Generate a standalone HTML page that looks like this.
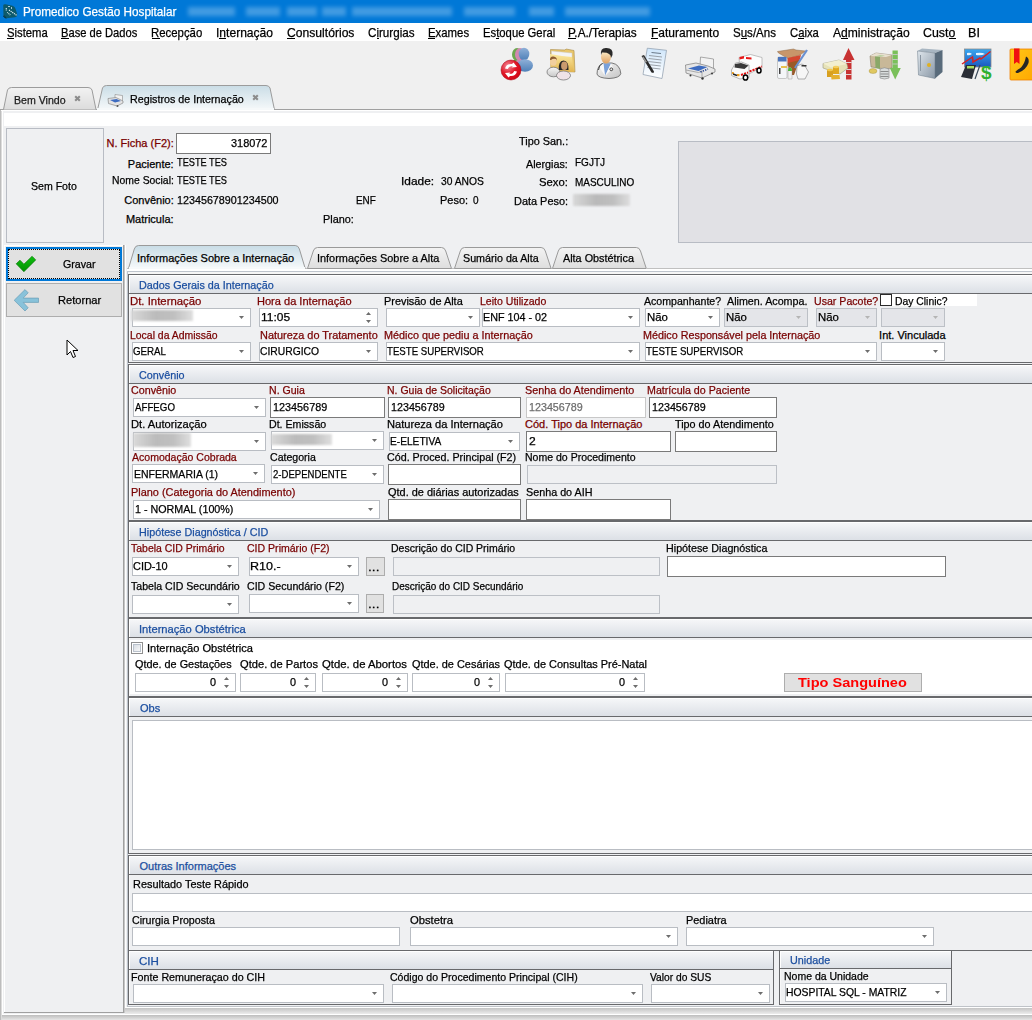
<!DOCTYPE html><html><head><meta charset="utf-8"><style>
html,body{margin:0;padding:0}
body{width:1032px;height:1020px;overflow:hidden;position:relative;background:#f0f0f0;font-family:"Liberation Sans",sans-serif}
.t{position:absolute;line-height:1;white-space:nowrap;transform-origin:0 0;-webkit-text-stroke:0.25px currentColor}
.b{position:absolute;box-sizing:border-box}
.r{position:absolute}
.blur{position:absolute;background:linear-gradient(90deg,#d6d6d6,#b4b4b4 40%,#bababa 70%,#dcdcdc);filter:blur(1.3px);opacity:.9}
svg{position:absolute;overflow:visible}
</style></head><body>
<div class="r" style="left:0px;top:0px;width:1032px;height:23px;background:#0078d7;"></div>
<svg style="left:0;top:0" width="20" height="20" viewBox="0 0 20 20"><path d="M3.2 5.5 Q3.5 4 5.5 4.3 L12.5 5.8 Q15 6.5 15.8 9.5 L17.3 14.5 Q17.3 17 15 17.3 L6.5 18.3 Q4 18.5 3.5 16Z" fill="#0d5a6b"/><path d="M6.3 8 V11" stroke="#cfe4ea" stroke-width="1.2" stroke-dasharray="1 .6"/><path d="M7.2 12.3 L10.3 15" stroke="#d6eaf0" stroke-width="1.1" stroke-dasharray="1 .7"/><path d="M9 10 L16.5 15.2" stroke="#e0f0f6" stroke-width="1.2" stroke-dasharray="1.2 .8"/><path d="M8 6.5 H10 M11.5 7 V9" stroke="#a8c8d2" stroke-width="1"/><path d="M3.6 15.8 L6.2 18.4" stroke="#0a1a20" stroke-width="1.2" stroke-dasharray="1 .6"/></svg>
<div class="t" style="left:22.56px;top:5.67px;font-size:12.2px;color:#fff;transform:scaleX(0.9638);">Promedico Gestão Hospitalar</div>
<div class="r" style="left:188px;top:7px;width:47px;height:9px;background:#8cc2ee;filter:blur(2.2px);opacity:.47"></div>
<div class="r" style="left:246px;top:7px;width:34px;height:9px;background:#8cc2ee;filter:blur(2.2px);opacity:.47"></div>
<div class="r" style="left:287px;top:7px;width:30px;height:9px;background:#8cc2ee;filter:blur(2.2px);opacity:.47"></div>
<div class="r" style="left:322px;top:7px;width:24px;height:9px;background:#8cc2ee;filter:blur(2.2px);opacity:.47"></div>
<div class="r" style="left:352px;top:7px;width:100px;height:9px;background:#8cc2ee;filter:blur(2.2px);opacity:.47"></div>
<div class="r" style="left:464px;top:7px;width:51px;height:9px;background:#8cc2ee;filter:blur(2.2px);opacity:.47"></div>
<div class="r" style="left:529px;top:7px;width:25px;height:9px;background:#8cc2ee;filter:blur(2.2px);opacity:.47"></div>
<div class="r" style="left:565px;top:7px;width:85px;height:9px;background:#8cc2ee;filter:blur(2.2px);opacity:.47"></div>
<div class="r" style="left:0px;top:23px;width:1032px;height:18px;background:#fff;"></div>
<div class="t" style="left:6.59px;top:26.67px;font-size:12.2px;color:#000;transform:scaleX(0.9266);">Sistema</div>
<div class="r" style="left:6.6px;top:38px;width:7.5px;height:1px;background:#000"></div>
<div class="t" style="left:61.31px;top:26.67px;font-size:12.2px;color:#000;transform:scaleX(0.9154);">Base de Dados</div>
<div class="r" style="left:61.3px;top:38px;width:7.4px;height:1px;background:#000"></div>
<div class="t" style="left:151.49px;top:26.67px;font-size:12.2px;color:#000;transform:scaleX(0.9338);">Recepção</div>
<div class="r" style="left:151.5px;top:38px;width:8.2px;height:1px;background:#000"></div>
<div class="t" style="left:216.01px;top:26.67px;font-size:12.2px;color:#000;transform:scaleX(0.9900);">Internação</div>
<div class="r" style="left:219.4px;top:38px;width:6.7px;height:1px;background:#000"></div>
<div class="t" style="left:286.59px;top:26.67px;font-size:12.2px;color:#000;transform:scaleX(0.9956);">Consultórios</div>
<div class="r" style="left:286.6px;top:38px;width:8.8px;height:1px;background:#000"></div>
<div class="t" style="left:368.22px;top:26.67px;font-size:12.2px;color:#000;transform:scaleX(0.9547);">Cirurgias</div>
<div class="r" style="left:376.6px;top:38px;width:2.6px;height:1px;background:#000"></div>
<div class="t" style="left:427.89px;top:26.67px;font-size:12.2px;color:#000;transform:scaleX(0.9334);">Exames</div>
<div class="r" style="left:427.9px;top:38px;width:7.6px;height:1px;background:#000"></div>
<div class="t" style="left:482.50px;top:26.67px;font-size:12.2px;color:#000;transform:scaleX(0.9266);">Estoque Geral</div>
<div class="r" style="left:495.7px;top:38px;width:3.1px;height:1px;background:#000"></div>
<div class="t" style="left:568.15px;top:26.67px;font-size:12.2px;color:#000;transform:scaleX(0.9698);">P.A./Terapias</div>
<div class="r" style="left:568.2px;top:38px;width:7.9px;height:1px;background:#000"></div>
<div class="t" style="left:650.54px;top:26.67px;font-size:12.2px;color:#000;transform:scaleX(0.9851);">Faturamento</div>
<div class="r" style="left:650.5px;top:38px;width:7.3px;height:1px;background:#000"></div>
<div class="t" style="left:733.08px;top:26.67px;font-size:12.2px;color:#000;transform:scaleX(0.9467);">Sus/Ans</div>
<div class="r" style="left:740.8px;top:38px;width:6.4px;height:1px;background:#000"></div>
<div class="t" style="left:789.74px;top:26.67px;font-size:12.2px;color:#000;transform:scaleX(0.9260);">Caixa</div>
<div class="r" style="left:797.9px;top:38px;width:6.3px;height:1px;background:#000"></div>
<div class="t" style="left:833.20px;top:26.67px;font-size:12.2px;color:#000;transform:scaleX(0.9922);">Administração</div>
<div class="r" style="left:841.3px;top:38px;width:6.7px;height:1px;background:#000"></div>
<div class="t" style="left:923.48px;top:26.67px;font-size:12.2px;color:#000;transform:scaleX(1.0148);">Custo</div>
<div class="r" style="left:948.9px;top:38px;width:6.9px;height:1px;background:#000"></div>
<div class="t" style="left:968.29px;top:26.67px;font-size:12.2px;color:#000;transform:scaleX(1.0326);">BI</div>
<svg style="left:497px;top:44px" width="40" height="40" viewBox="0 0 40 40">
<defs><radialGradient id="rc" cx="0.35" cy="0.3" r="0.8"><stop offset="0" stop-color="#f48a98"/><stop offset="0.5" stop-color="#e01828"/><stop offset="1" stop-color="#d00010"/></radialGradient>
<linearGradient id="bp" x1="0" y1="0" x2="0" y2="1"><stop offset="0" stop-color="#8fb0d8"/><stop offset="1" stop-color="#4f80b8"/></linearGradient></defs>
<ellipse cx="20" cy="10.5" rx="5" ry="6.5" fill="#6aa84f"/><ellipse cx="21" cy="21" rx="7" ry="6" fill="#6aa84f"/>
<ellipse cx="23" cy="10.5" rx="5" ry="6.5" fill="#d088b0"/><ellipse cx="24" cy="21" rx="7" ry="6" fill="#d088b0"/>
<ellipse cx="27" cy="10" rx="5.3" ry="6.3" fill="url(#bp)"/><ellipse cx="28" cy="21.5" rx="8" ry="6.2" fill="url(#bp)"/>
<circle cx="14" cy="26" r="10" fill="url(#rc)" stroke="#a00010" stroke-width=".5"/>
<path d="M8 24.5 Q9.5 19.5 15 20 L16.5 18.5 L20 23 L14.5 23.5 L15.8 22.2 Q12 21.8 10.8 25Z M20 27.5 Q18.5 32.5 13 32 L11.5 33.5 L8 29 L13.5 28.5 L12.2 29.8 Q16 30.2 17.2 27Z" fill="#fff"/>
</svg>
<svg style="left:543px;top:44px" width="40" height="40" viewBox="0 0 40 40">
<defs><linearGradient id="fd" x1="0" y1="0" x2="0" y2="1"><stop offset="0" stop-color="#fbe9a0"/><stop offset="1" stop-color="#e2b450"/></linearGradient></defs>
<path d="M7.5 5.5 L22 6 L23 5 L31 6.5 L32 28 L8 27Z" fill="#e9c66a" stroke="#a88a48" stroke-width=".6"/>
<path d="M8.5 7 L29 9 L29 14 L8.5 12Z" fill="#f4f4f4" stroke="#c0c0c0" stroke-width=".4"/>
<path d="M7 10 L19 12 L29 13 L31 28 L8 27Z" fill="url(#fd)"/>
<defs><linearGradient id="bd1" x1="0" y1="0" x2="0" y2="1"><stop offset="0" stop-color="#f6f6f6"/><stop offset="1" stop-color="#c8c8c8"/></linearGradient></defs><ellipse cx="10.5" cy="28" rx="6.5" ry="4.8" fill="url(#bd1)" stroke="#6a6a6a" stroke-width=".7"/>
<ellipse cx="10.3" cy="17.5" rx="3.3" ry="4.3" fill="#f1cf9e"/><path d="M7 16 Q7 12 10.5 12.5 Q14 13 14 16.5 L13 15 Q10 14 8 16Z" fill="#8a5a30"/>
<ellipse cx="20.5" cy="31.5" rx="7" ry="4.5" fill="#efe2e6" stroke="#6a6a6a" stroke-width=".7"/>
<path d="M15.8 26 Q15 17 20.5 16.5 Q26 17 25.5 26 Z" fill="#262626"/><ellipse cx="21.3" cy="21.8" rx="3.2" ry="4.3" fill="#c99a6e"/>
</svg>
<svg style="left:589px;top:44px" width="40" height="40" viewBox="0 0 40 40">
<defs><linearGradient id="fc" x1="0" y1="0" x2="0" y2="1"><stop offset="0" stop-color="#fdf2d0"/><stop offset="1" stop-color="#e0a060"/></linearGradient></defs>
<defs><linearGradient id="dc" x1="0" y1="0" x2="1" y2="1"><stop offset="0" stop-color="#f8f8f8"/><stop offset="1" stop-color="#c4c4c4"/></linearGradient></defs><path d="M8 30 Q8 21.5 14.5 19 L23 19 Q31 20.5 31.8 29.5 Q31 34 20 34.5 Q9 34 8 30Z" fill="url(#dc)" stroke="#5a5a5a" stroke-width=".8"/>
<path d="M14 19.5 L22 19.5 L16 32Z" fill="#7aa0d8"/>
<path d="M14.5 19.5 L16 32 L11 24Z M22 19.5 L16 32 L24 24Z" fill="#f8f8f8"/>
<ellipse cx="17" cy="13" rx="5" ry="6.5" fill="url(#fc)"/>
<path d="M12 11 Q11 3.5 17.5 4 Q24.5 4.2 23.5 11 L22 14 Q22 8 13 8.5Z" fill="#2a2a2a"/>
<circle cx="22.3" cy="25.3" r="1.4" fill="none" stroke="#444" stroke-width="1"/><path d="M9.5 26 Q10 21 13 19.5" stroke="#333" stroke-width=".9" fill="none"/>
</svg>
<svg style="left:635px;top:44px" width="40" height="40" viewBox="0 0 40 40">
<defs><linearGradient id="pp" x1="0" y1="0" x2="0" y2="1"><stop offset="0" stop-color="#cfe6fb"/><stop offset="1" stop-color="#ffffff"/></linearGradient></defs>
<path d="M12.3 4.2 L31.5 6.3 L27 34.5 L8 30.5Z" fill="url(#pp)" stroke="#8a9aaa" stroke-width=".7"/>
<path d="M16.5 8.5 L26 9.5" stroke="#6a7a8a" stroke-width="1"/>
<path d="M14 11.5 L27 13 M13.6 14.5 L26.6 16 M13.2 17.5 L26.2 19 M12.8 20.5 L25.8 22 M12.4 23.5 L25.4 25" stroke="#9aa2aa" stroke-width="1"/>
<path d="M6.5 12 L9 11 L19 27.5 L18.5 29 L16.5 28.5Z" fill="#2a2a2a"/><path d="M7 13 L8.5 12.5 L12 18 L10.5 18.5Z" fill="#9a9a9a"/>
</svg>
<svg style="left:680px;top:44px" width="40" height="40" viewBox="0 0 40 40">
<path d="M20.5 13 L33.5 15 L33.5 27 L29 26 L20 22Z" fill="#f2f2f2" stroke="#8a8a8a" stroke-width=".7"/>
<path d="M5.5 21 L16 19 L28 22 L35 25 L35 28 L22 34 L6 29Z" fill="#e6e6e6" stroke="#7a7a7a" stroke-width=".7"/>
<path d="M8 24.5 L19 21.5 L27.5 23 L18.5 27Z" fill="#3e6cc0"/>
<path d="M6 26 L18.5 28.5 L22 27 L22 33.5" fill="none" stroke="#9a9a9a" stroke-width=".8"/>
<path d="M20.5 28 L28 25" stroke="#1a3a8a" stroke-width="1.6" stroke-dasharray="1.2 1.3"/>
<circle cx="10.5" cy="31.5" r="1" fill="#333"/><circle cx="22.5" cy="34.5" r="1.2" fill="#333"/><circle cx="32" cy="29.5" r="1.1" fill="#444"/>
</svg>
<svg style="left:726px;top:44px" width="40" height="40" viewBox="0 0 40 40">
<path d="M13 13.5 L24.5 10.5 L36 13.5 L36 23 L23 30 L14 27Z" fill="#fdfdfd" stroke="#9a9a9a" stroke-width=".6"/>
<path d="M5.5 26 L9.5 19 L15.5 18 L23 21 L23 33.5 L14 35 L5.5 31.5Z" fill="#fafafa" stroke="#8a8a8a" stroke-width=".6"/>
<path d="M9 20 L15 19 L22.5 21.5 L18.5 25 L8.5 23.5Z" fill="#3a3a3a"/>
<path d="M13.5 13 L18 12 L18 14.5 L13.5 15.5Z M20 13 L25.5 13.5 L25.5 15.5 L20 15Z" fill="#e81818"/>
<path d="M15 31 L22 28.5 M23.5 27.5 L36 22.5" stroke="#e01010" stroke-width="2" stroke-dasharray="2.2 1"/>
<rect x="6" y="28" width="1.8" height="2" fill="#f0a020"/><rect x="11" y="30" width="2.5" height="2.2" fill="#f0a020"/><path d="M7 30 L11 31.5" stroke="#222" stroke-width="1.5"/>
<ellipse cx="19.5" cy="33.5" rx="2.2" ry="2.6" fill="#fff" stroke="#000" stroke-width="1.5"/><ellipse cx="33" cy="26.5" rx="2" ry="2.5" fill="#fff" stroke="#000" stroke-width="1.5"/>
</svg>
<svg style="left:772px;top:44px" width="40" height="40" viewBox="0 0 40 40">
<path d="M5.5 7.5 L21.5 5 L24 6 L33.5 7 L28 11 L16 14.5 L6.5 9Z" fill="#c8966a" stroke="#8a6a4a" stroke-width=".5"/>
<path d="M15.5 14 L29 11 L27 19 L15.5 22Z" fill="#d44830"/>
<path d="M16 19 L27.5 16 L22 31 L17 31Z" fill="#9a5a28"/>
<rect x="5.5" y="13" width="9.5" height="21.5" rx="1.5" fill="#f4f6f8" stroke="#9a9a9a" stroke-width=".5"/>
<rect x="6" y="13" width="8.5" height="4.5" fill="#4a74bc"/><rect x="9" y="22" width="6" height="2" fill="#e8c050"/><rect x="7" y="24" width="1.5" height="6" fill="#444"/>
<path d="M16 27 Q16 23.5 18 23.5 Q20 23.5 20 27 L20 35 L16 35Z" fill="#f0f0f0" stroke="#888" stroke-width=".4"/><path d="M16 27 Q16 23.5 18 23.5 Q20 23.5 20 27Z" fill="#4ab83a"/>
<path d="M23 24 L35 6" stroke="#6a90d0" stroke-width="2.2"/>
<path d="M25 22 L30 20 L33 22 L36.5 28 L33 35 L26 35 L24.5 30Z" fill="#f6f6f6" stroke="#666" stroke-width=".5"/><rect x="29.5" y="21" width="5" height="1.5" fill="#333"/>
</svg>
<svg style="left:818px;top:44px" width="40" height="40" viewBox="0 0 40 40">
<path d="M30.5 4 L36.5 16 L33.5 16 L33.5 35.5 L28 35.5 L28 16 L25 16Z" fill="#c83232"/>
<path d="M28 18.5 H33.5 M28 25.5 H33.5 M28 30.5 H33.5" stroke="#e8e8e8" stroke-width=".9"/>
<path d="M5 19.5 L21 16 L29 20 L30 24 L22 30 L5 24Z" fill="#e6e2b8" stroke="#8a8a70" stroke-width=".5"/><path d="M5 19.5 L21 16 L29 20 L13 23.5Z" fill="#f2efd0"/>
<path d="M9 26 L15 26 L15 33 L9 33Z" fill="#d8a020"/><ellipse cx="12" cy="26" rx="3" ry="1.3" fill="#f0c850"/>
<path d="M15 23 L21 23 L21 30 L15 30Z" fill="#e0a820"/><ellipse cx="18" cy="23" rx="3" ry="1.3" fill="#f4d060"/>
<path d="M13 31 L21.5 31 L22 35 L13.5 35.5Z" fill="#e4b030"/>
</svg>
<svg style="left:864px;top:44px" width="40" height="40" viewBox="0 0 40 40">
<path d="M6 12 L12 9 L28 11 L28 24 L22 25 L7 23Z" fill="#c8b898" stroke="#7a705a" stroke-width=".5"/>
<path d="M6 12 L12 9 L28 11 L22 13Z" fill="#e8e0d0"/>
<path d="M11 12.5 L16 11 L21 11.5 L16 13Z" fill="#b8d0a0"/><path d="M11 12.5 L16 13 L16 25 L11.5 24Z" fill="#8aa868"/>
<ellipse cx="9" cy="27" rx="4" ry="2.5" fill="#e0c860" stroke="#a08a40" stroke-width=".4"/>
<path d="M16 25 Q20.5 22.5 25 25 L25 34 Q20.5 36 16 34Z" fill="#d8dcdc" stroke="#707070" stroke-width=".5"/>
<path d="M16.5 27.5 H24.5 M16.5 30 H24.5 M16.5 32.5 H24.5" stroke="#6a6a6a" stroke-width=".7"/>
<path d="M28.5 6.5 L33.8 6.5 L33.8 24 L36.8 24 L31.2 35.5 L25.8 24 L28.5 24Z" fill="#7ac05a"/>
<path d="M28.5 10.5 H33.8 M28.5 15.5 H33.8 M28.5 20 H33.8" stroke="#c8c8c8" stroke-width=".9"/>
</svg>
<svg style="left:910px;top:44px" width="40" height="40" viewBox="0 0 40 40">
<defs><linearGradient id="sf" x1="0" y1="0" x2="1" y2="1"><stop offset="0" stop-color="#dfe6ec"/><stop offset="1" stop-color="#8a98a6"/></linearGradient></defs>
<path d="M7.5 7 L12 4.5 L32.5 6 L25 9Z" fill="#a8b6c2"/>
<path d="M25 9 L32.5 6 L32.5 28 L25 34.5Z" fill="#596b7b"/>
<path d="M7.5 7 L25 9 L25 34.5 L8.5 31Z" fill="url(#sf)" stroke="#6a7a88" stroke-width=".5"/>
<path d="M10.5 11 L10.5 27" stroke="#8a96a2" stroke-width="1"/>
<circle cx="19" cy="21" r="2" fill="#e0b020"/>
</svg>
<svg style="left:956px;top:44px" width="40" height="40" viewBox="0 0 40 40">
<defs><linearGradient id="sc" x1="0" y1="0" x2="0" y2="1"><stop offset="0" stop-color="#3aa8f0"/><stop offset="1" stop-color="#1a58c0"/></linearGradient></defs>
<rect x="8.5" y="5" width="26.5" height="18" fill="url(#sc)" stroke="#8a8a8a" stroke-width=".8"/>
<path d="M11 9 Q14 8 16 10 Q13 12 11 11Z M20 9 Q26 8 29 10 Q25 12 20 11Z" fill="#e8f4ff"/>
<path d="M6 20 L16.5 13 L17 18 L24 14 L25 15 L34.5 7.5" stroke="#d82020" stroke-width="1.5" fill="none"/>
<path d="M5 33 L10 21 L20 21 L16 35Z" fill="#2a2e36"/><rect x="11" y="22" width="7" height="2.5" fill="#a8e060"/>
<path d="M19 35 L24 21" stroke="#3a4a5a" stroke-width="1.2"/>
<text x="25" y="34.5" font-size="19" font-weight="bold" fill="#30b030" font-family="Liberation Sans">$</text>
</svg>
<svg style="left:1000px;top:44px" width="32" height="40" viewBox="0 0 32 40">
<defs><linearGradient id="bk" x1="0" y1="0" x2="1" y2="1"><stop offset="0" stop-color="#ffc818"/><stop offset="1" stop-color="#ffa800"/></linearGradient></defs>
<rect x="10" y="5" width="24" height="31" rx="1" fill="url(#bk)" stroke="#f08000" stroke-width=".8"/>
<path d="M14 4.5 L19.5 4.5 L19.5 20 L16.8 18 L14 20Z" fill="#f01010"/>
<path d="M26 12.5 Q29.5 14 28.5 19 Q26 26 18 29 Q15.5 29.5 15.5 27.5 L18 25.5 Q21.5 24 24 19 L25 16.5Z" fill="#262626"/>
</svg>
<div class="r" style="left:0px;top:109px;width:1032px;height:1px;background:#a0a0a0;"></div>
<svg style="left:0;top:84px" width="100" height="27" viewBox="0 0 100 27"><defs><linearGradient id="g1" x1="0" y1="0" x2="0" y2="1"><stop offset="0" stop-color="#f2f2f2"/><stop offset="1" stop-color="#dcdcdc"/></linearGradient></defs><path d="M3.5 25.5 L7.5 6 Q8.5 3.5 11.5 3.5 L88 3.5 Q91 3.5 92 6 L96 25.5" fill="url(#g1)" stroke="#9c9c9c" stroke-width="1"/></svg>
<div class="t" style="left:13.95px;top:94.69px;font-size:11px;color:#1a1a1a;transform:scaleX(0.9636);">Bem Vindo</div>
<svg style="left:74px;top:95px" width="7" height="7" viewBox="0 0 7 7"><path d="M1.2 1.2L5.8 5.8M5.8 1.2L1.2 5.8" stroke="#8c8c8c" stroke-width="2.1"/></svg>
<svg style="left:94px;top:82px" width="185" height="30" viewBox="0 0 185 30"><defs><linearGradient id="g2" x1="0" y1="0" x2="0" y2="1"><stop offset="0" stop-color="#cadde6"/><stop offset="1" stop-color="#f6f9fa"/></linearGradient></defs><path d="M3.5 28 L8.5 6 Q9.5 3.5 12.5 3.5 L172 3.5 Q175 3.5 176 6 L180.5 28" fill="url(#g2)" stroke="#9c9c9c" stroke-width="1"/></svg>
<div class="r" style="left:97px;top:108px;width:177px;height:3px;background:#f6f9fa;"></div>
<div class="t" style="left:130.14px;top:93.99px;font-size:11px;color:#000;transform:scaleX(0.9745);">Registros de Internação</div>
<svg style="left:252px;top:94px" width="7" height="7" viewBox="0 0 7 7"><path d="M1.2 1.2L5.8 5.8M5.8 1.2L1.2 5.8" stroke="#8c8c8c" stroke-width="2.1"/></svg>
<svg style="left:107px;top:93px" width="17" height="14" viewBox="0 0 17 14"><path d="M8 1.5 L15.5 2.5 L15.5 9 L8 8Z" fill="#f2f2f2" stroke="#8a8a8a" stroke-width=".6"/><path d="M1 5.5 L9 4.5 L16 8 L16 10 L10 13 L1.5 10.5Z" fill="#e4e4e4" stroke="#7a7a7a" stroke-width=".6"/><path d="M3 7 L9.5 6 L14 8 L8 9.5Z" fill="#3d6cc0"/><circle cx="10.5" cy="13" r="1" fill="#555"/></svg>
<div class="r" style="left:0px;top:110px;width:1032px;height:910px;background:#eff0f2;"></div>
<div class="r" style="left:0px;top:110px;width:1px;height:910px;background:#bdbdbd;"></div>
<div class="r" style="left:1px;top:110px;width:1px;height:910px;background:#dcdcdc;"></div>
<div class="r" style="left:2px;top:110px;width:1px;height:905px;background:#ffffff;"></div>
<div class="r" style="left:1px;top:110px;width:1031px;height:1px;background:#ffffff;"></div>
<div class="r" style="left:4px;top:113px;width:1028px;height:13px;background:#ffffff;"></div>
<div class="b" style="left:6px;top:128px;width:98px;height:115px;background:#eff0f2;border:1px solid #b8bcc4;"></div>
<div class="t" style="left:30.82px;top:180.69px;font-size:11px;color:#000;transform:scaleX(0.9604);">Sem Foto</div>
<div class="b" style="left:678px;top:141px;width:363px;height:102px;background:#e1e1e5;border:1px solid #b8bcc4;"></div>
<div class="t" style="left:106.52px;top:138.19px;font-size:11px;color:#780000;">N. Ficha (F2):</div>
<div class="b" style="left:176px;top:133px;width:95px;height:21px;background:#fff;border:1px solid #7a7a7a;"></div>
<div class="t" style="left:230.82px;top:137.69px;font-size:11px;color:#000;transform:scaleX(0.9930);">318072</div>
<div class="t" style="left:127.82px;top:159.39px;font-size:11px;color:#000;">Paciente:</div>
<div class="t" style="left:177.32px;top:156.89px;font-size:11px;color:#000;transform:scaleX(0.8379);">TESTE TES</div>
<div class="t" style="left:111.77px;top:175.09px;font-size:11px;color:#000;transform:scaleX(0.9453);">Nome Social:</div>
<div class="t" style="left:177.32px;top:174.89px;font-size:11px;color:#000;transform:scaleX(0.8379);">TESTE TES</div>
<div class="t" style="left:124.25px;top:194.89px;font-size:11px;color:#000;">Convênio:</div>
<div class="t" style="left:176.69px;top:194.59px;font-size:11px;color:#000;transform:scaleX(0.9767);">12345678901234500</div>
<div class="t" style="left:125.92px;top:214.39px;font-size:11px;color:#000;">Matricula:</div>
<div class="t" style="left:355.81px;top:195.39px;font-size:11px;color:#000;transform:scaleX(0.8994);">ENF</div>
<div class="t" style="left:322.83px;top:214.39px;font-size:11px;color:#000;transform:scaleX(0.9874);">Plano:</div>
<div class="t" style="left:400.73px;top:175.89px;font-size:11px;color:#000;transform:scaleX(1.0818);">Idade:</div>
<div class="t" style="left:440.64px;top:175.89px;font-size:11px;color:#000;transform:scaleX(0.9347);">30 ANOS</div>
<div class="t" style="left:439.62px;top:195.39px;font-size:11px;color:#000;transform:scaleX(0.9966);">Peso:</div>
<div class="t" style="left:472.60px;top:194.89px;font-size:11px;color:#000;transform:scaleX(0.9091);">0</div>
<div class="t" style="left:518.78px;top:136.39px;font-size:11px;color:#000;transform:scaleX(0.9884);">Tipo San.:</div>
<div class="t" style="left:526.10px;top:158.89px;font-size:11px;color:#000;transform:scaleX(0.9772);">Alergias:</div>
<div class="t" style="left:574.90px;top:156.89px;font-size:11px;color:#000;transform:scaleX(0.9107);">FGJTJ</div>
<div class="t" style="left:539.09px;top:176.69px;font-size:11px;color:#000;transform:scaleX(1.0272);">Sexo:</div>
<div class="t" style="left:574.90px;top:176.69px;font-size:11px;color:#000;transform:scaleX(0.9060);">MASCULINO</div>
<div class="t" style="left:513.93px;top:195.89px;font-size:11px;color:#000;transform:scaleX(0.9928);">Data Peso:</div>
<div class="blur" style="left:573px;top:194px;width:57px;height:12px"></div>
<div class="r" style="left:4px;top:245px;width:119px;height:1px;background:#ffffff;"></div>
<div class="r" style="left:4px;top:245px;width:1px;height:767px;background:#ffffff;"></div>
<div class="r" style="left:123px;top:245px;width:1px;height:768px;background:#a0a0a0;"></div>
<div class="r" style="left:4px;top:1012px;width:120px;height:1px;background:#a0a0a0;"></div>
<div class="r" style="left:124px;top:245px;width:1px;height:768px;background:#c6c6c6;"></div>
<div class="r" style="left:125px;top:245px;width:1px;height:768px;background:#ffffff;"></div>
<div class="r" style="left:125px;top:1007px;width:907px;height:1px;background:#ffffff;"></div>
<div class="r" style="left:125px;top:1008px;width:907px;height:6px;background:#e0e0e0;background:linear-gradient(#c4c4c4,#ececec)"></div>
<div class="r" style="left:2px;top:1014px;width:1030px;height:1px;background:#ffffff;"></div>
<div class="r" style="left:2px;top:1015px;width:1030px;height:5px;background:#e0e0e0;background:linear-gradient(#bdbdbd,#e6e6e6)"></div>
<div class="b" style="left:6px;top:247px;width:116px;height:34px;background:#e1e1e1;border:1px solid #0078d7;border-width:2px"></div>
<div class="b" style="left:8px;top:249px;width:112px;height:30px;border:1px dotted #000"></div>
<div class="t" style="left:63.27px;top:258.69px;font-size:11px;color:#000;transform:scaleX(0.9683);">Gravar</div>
<svg style="left:15px;top:255px" width="22" height="18" viewBox="0 0 22 18"><defs><linearGradient id="ck" x1="0" y1="0" x2="0" y2="1"><stop offset="0" stop-color="#10c010"/><stop offset="1" stop-color="#009000"/></linearGradient></defs><path d="M1.2 8.8 L5 5.2 L8.9 9.2 L17.1 1.3 L20.7 4.9 L8.9 16.7Z" fill="url(#ck)" stroke="#0a7a0a" stroke-width=".7" stroke-linejoin="round"/></svg>
<div class="b" style="left:6px;top:283px;width:116px;height:34px;background:#e1e1e1;border:1px solid #adadad;"></div>
<div class="t" style="left:57.81px;top:294.69px;font-size:11px;color:#000;transform:scaleX(1.0096);">Retornar</div>
<svg style="left:13px;top:288px" width="28" height="24" viewBox="0 0 28 24"><path d="M1.2 12.3 L12 1.6 L15.2 4.8 L10.2 10.1 L25.5 10.1 L25.5 14.4 L10.2 14.4 L15.2 19.8 L12 23Z" fill="#88c2da" stroke="#6a9db6" stroke-width=".7" stroke-linejoin="round"/></svg>
<svg style="left:66px;top:339px" width="14" height="20" viewBox="0 0 14 20"><path d="M1 1 L1 16 L4.5 12.5 L7 18.5 L9.5 17.5 L7 11.5 L12 11.5 Z" fill="#fff" stroke="#000" stroke-width="1"/></svg>
<div class="r" style="left:127px;top:268px;width:905px;height:1px;background:#c0c0c0;"></div>
<div class="r" style="left:127px;top:269px;width:905px;height:2px;background:#ffffff;"></div>
<div class="r" style="left:127px;top:271px;width:905px;height:1px;background:#bec4cc;"></div>
<div class="r" style="left:127px;top:272px;width:905px;height:2px;background:#f6f6f6;"></div>
<div class="r" style="left:127px;top:271px;width:1px;height:736px;background:#bec4cc;"></div>
<div class="r" style="left:127px;top:1006px;width:905px;height:1px;background:#bfc3c8;"></div>
<svg style="left:307px;top:247px" width="146.5" height="23.5" viewBox="0 0 146.5 23.5"><defs><linearGradient id="pt307" x1="0" y1="0" x2="0" y2="1"><stop offset="0" stop-color="#f3f3f3"/><stop offset="1" stop-color="#dedede"/></linearGradient></defs><path d="M0.5 21.5 L6.3 4 Q7.3 0.5 10.5 0.5 L134.5 0.5 Q137.7 0.5 138.7 4 L144.5 21.5Z" fill="url(#pt307)" stroke="#9a9a9a" stroke-width="1"/></svg>
<div class="t" style="left:316.82px;top:252.69px;font-size:11px;color:#000;transform:scaleX(0.9907);">Informações Sobre a Alta</div>
<svg style="left:453.5px;top:247px" width="99.10000000000002" height="23.5" viewBox="0 0 99.10000000000002 23.5"><defs><linearGradient id="pt453" x1="0" y1="0" x2="0" y2="1"><stop offset="0" stop-color="#f3f3f3"/><stop offset="1" stop-color="#dedede"/></linearGradient></defs><path d="M0.5 21.5 L6.3 4 Q7.3 0.5 10.5 0.5 L87.10000000000002 0.5 Q90.30000000000003 0.5 91.30000000000003 4 L97.10000000000002 21.5Z" fill="url(#pt453)" stroke="#9a9a9a" stroke-width="1"/></svg>
<div class="t" style="left:463.42px;top:252.69px;font-size:11px;color:#000;transform:scaleX(0.9745);">Sumário da Alta</div>
<svg style="left:552.3px;top:247px" width="96.30000000000007" height="23.5" viewBox="0 0 96.30000000000007 23.5"><defs><linearGradient id="pt552" x1="0" y1="0" x2="0" y2="1"><stop offset="0" stop-color="#f3f3f3"/><stop offset="1" stop-color="#dedede"/></linearGradient></defs><path d="M0.5 21.5 L6.3 4 Q7.3 0.5 10.5 0.5 L84.30000000000007 0.5 Q87.50000000000007 0.5 88.50000000000007 4 L94.30000000000007 21.5Z" fill="url(#pt552)" stroke="#9a9a9a" stroke-width="1"/></svg>
<div class="t" style="left:562.90px;top:252.69px;font-size:11px;color:#000;transform:scaleX(0.9833);">Alta Obstétrica</div>
<svg style="left:128px;top:245px" width="179.2" height="25.5" viewBox="0 0 179.2 25.5"><defs><linearGradient id="pt128" x1="0" y1="0" x2="0" y2="1"><stop offset="0" stop-color="#c8dce6"/><stop offset="1" stop-color="#f6f9fa"/></linearGradient></defs><path d="M0.5 23.5 L6.3 4 Q7.3 0.5 10.5 0.5 L167.2 0.5 Q170.39999999999998 0.5 171.39999999999998 4 L177.2 23.5" fill="url(#pt128)" stroke="#9a9a9a" stroke-width="1"/></svg>
<div class="t" style="left:137.01px;top:252.69px;font-size:11px;color:#000;">Informações Sobre a Internação</div>
<div class="r" style="left:129px;top:267px;width:176px;height:2px;background:#f6f9fa;"></div>
<div class="r" style="left:646px;top:268px;width:386px;height:1px;background:#c0c0c0;"></div>
<div class="b" style="left:128px;top:274px;width:912px;height:89px;background:#eff0f2;border:1px solid #68696c"></div>
<div class="r" style="left:129px;top:275px;width:910px;height:18px;background:linear-gradient(#ffffff 0px,#ffffff 1px,#f5f6f8 1px,#dce0e6 18px);border-bottom:1px solid #68696c"></div>
<div class="r" style="left:129px;top:275px;width:1px;height:18px;background:#fff"></div>
<div class="r" style="left:129px;top:294px;width:1px;height:68px;background:#f8f8f9"></div>
<div class="t" style="left:139.14px;top:279.69px;font-size:11px;color:#1c4fa0;transform:scaleX(0.9792);">Dados Gerais da Internação</div>
<div class="b" style="left:128px;top:364px;width:912px;height:157px;background:#eff0f2;border:1px solid #68696c"></div>
<div class="r" style="left:129px;top:365px;width:910px;height:18px;background:linear-gradient(#ffffff 0px,#ffffff 1px,#f5f6f8 1px,#dce0e6 18px);border-bottom:1px solid #68696c"></div>
<div class="r" style="left:129px;top:365px;width:1px;height:18px;background:#fff"></div>
<div class="r" style="left:129px;top:384px;width:1px;height:136px;background:#f8f8f9"></div>
<div class="t" style="left:139.46px;top:369.69px;font-size:11px;color:#1c4fa0;transform:scaleX(0.9805);">Convênio</div>
<div class="b" style="left:128px;top:521px;width:912px;height:97px;background:#eff0f2;border:1px solid #68696c"></div>
<div class="r" style="left:129px;top:522px;width:910px;height:18px;background:linear-gradient(#ffffff 0px,#ffffff 1px,#f5f6f8 1px,#dce0e6 18px);border-bottom:1px solid #68696c"></div>
<div class="r" style="left:129px;top:522px;width:1px;height:18px;background:#fff"></div>
<div class="r" style="left:129px;top:541px;width:1px;height:76px;background:#f8f8f9"></div>
<div class="t" style="left:139.14px;top:526.69px;font-size:11px;color:#1c4fa0;transform:scaleX(0.9787);">Hipótese Diagnóstica / CID</div>
<div class="b" style="left:128px;top:618px;width:912px;height:79px;background:#eff0f2;border:1px solid #68696c"></div>
<div class="r" style="left:129px;top:619px;width:910px;height:18px;background:linear-gradient(#ffffff 0px,#ffffff 1px,#f5f6f8 1px,#dce0e6 18px);border-bottom:1px solid #68696c"></div>
<div class="r" style="left:129px;top:619px;width:1px;height:18px;background:#fff"></div>
<div class="r" style="left:129px;top:638px;width:1px;height:58px;background:#f8f8f9"></div>
<div class="t" style="left:138.99px;top:623.69px;font-size:11px;color:#1c4fa0;transform:scaleX(1.0156);">Internação Obstétrica</div>
<div class="b" style="left:128px;top:697px;width:912px;height:157px;background:#eff0f2;border:1px solid #68696c"></div>
<div class="r" style="left:129px;top:698px;width:910px;height:18px;background:linear-gradient(#ffffff 0px,#ffffff 1px,#f5f6f8 1px,#dce0e6 18px);border-bottom:1px solid #68696c"></div>
<div class="r" style="left:129px;top:698px;width:1px;height:18px;background:#fff"></div>
<div class="r" style="left:129px;top:717px;width:1px;height:136px;background:#f8f8f9"></div>
<div class="t" style="left:139.50px;top:702.69px;font-size:11px;color:#1c4fa0;transform:scaleX(1.0049);">Obs</div>
<div class="b" style="left:128px;top:855px;width:912px;height:96px;background:#eff0f2;border:1px solid #68696c"></div>
<div class="r" style="left:129px;top:856px;width:910px;height:18px;background:linear-gradient(#ffffff 0px,#ffffff 1px,#f5f6f8 1px,#dce0e6 18px);border-bottom:1px solid #68696c"></div>
<div class="r" style="left:129px;top:856px;width:1px;height:18px;background:#fff"></div>
<div class="r" style="left:129px;top:875px;width:1px;height:75px;background:#f8f8f9"></div>
<div class="t" style="left:139.50px;top:860.69px;font-size:11px;color:#1c4fa0;">Outras Informações</div>
<div class="b" style="left:128px;top:950px;width:646px;height:55px;background:#eff0f2;border:1px solid #68696c"></div>
<div class="r" style="left:129px;top:951px;width:644px;height:18px;background:linear-gradient(#ffffff 0px,#ffffff 1px,#f5f6f8 1px,#dce0e6 18px);border-bottom:1px solid #68696c"></div>
<div class="r" style="left:129px;top:951px;width:1px;height:18px;background:#fff"></div>
<div class="r" style="left:129px;top:970px;width:1px;height:34px;background:#f8f8f9"></div>
<div class="t" style="left:139.42px;top:955.69px;font-size:11px;color:#1c4fa0;transform:scaleX(1.0520);">CIH</div>
<div class="b" style="left:779px;top:950px;width:173px;height:55px;background:#eff0f2;border:1px solid #68696c"></div>
<div class="r" style="left:780px;top:951px;width:171px;height:17px;background:linear-gradient(#ffffff 0px,#ffffff 1px,#f5f6f8 1px,#dce0e6 17px);border-bottom:1px solid #68696c"></div>
<div class="r" style="left:780px;top:951px;width:1px;height:17px;background:#fff"></div>
<div class="r" style="left:780px;top:969px;width:1px;height:35px;background:#f8f8f9"></div>
<div class="t" style="left:790.19px;top:954.69px;font-size:11px;color:#1c4fa0;transform:scaleX(0.9796);">Unidade</div>
<div class="t" style="left:129.59px;top:295.69px;font-size:11px;color:#780000;transform:scaleX(1.0331);">Dt. Internação</div>
<div class="b" style="left:132px;top:308px;width:119px;height:19px;background:#fff;border:1px solid #b9bdc3;"></div>
<div class="blur" style="left:131px;top:310px;width:62px;height:11px;"></div>
<svg style="left:239px;top:316px" width="5" height="3" viewBox="0 0 5 3"><path d="M0 0H5L2.5 3Z" fill="#6d6d6d"/></svg>
<div class="t" style="left:256.82px;top:295.69px;font-size:11px;color:#780000;transform:scaleX(1.0039);">Hora da Internação</div>
<div class="b" style="left:259px;top:308px;width:119px;height:19px;background:#fff;border:1px solid #b9bdc3;"></div>
<div class="t" style="left:261.10px;top:311.69px;font-size:11px;color:#000;transform:scaleX(1.0901);">11:05</div>
<svg style="left:366px;top:312px" width="5" height="11" viewBox="0 0 5 11"><path d="M0 3H5L2.5 0Z M0 8H5L2.5 11Z" fill="#6d6d6d"/></svg>
<div class="t" style="left:383.63px;top:295.69px;font-size:11px;color:#000;transform:scaleX(0.9899);">Previsão de Alta</div>
<div class="b" style="left:386px;top:308px;width:94px;height:19px;background:#fff;border:1px solid #b9bdc3;"></div>
<svg style="left:468px;top:316px" width="5" height="3" viewBox="0 0 5 3"><path d="M0 0H5L2.5 3Z" fill="#6d6d6d"/></svg>
<div class="t" style="left:479.96px;top:295.69px;font-size:11px;color:#780000;transform:scaleX(0.9593);">Leito Utilizado</div>
<div class="b" style="left:482px;top:308px;width:158px;height:19px;background:#fff;border:1px solid #b9bdc3;"></div>
<div class="t" style="left:483.24px;top:311.69px;font-size:11px;color:#000;transform:scaleX(0.9771);">ENF 104 - 02</div>
<svg style="left:628px;top:316px" width="5" height="3" viewBox="0 0 5 3"><path d="M0 0H5L2.5 3Z" fill="#6d6d6d"/></svg>
<div class="t" style="left:643.60px;top:295.69px;font-size:11px;color:#000;transform:scaleX(0.9624);">Acompanhante?</div>
<div class="b" style="left:645px;top:308px;width:75px;height:19px;background:#fff;border:1px solid #b9bdc3;"></div>
<div class="t" style="left:646.59px;top:311.69px;font-size:11px;color:#000;transform:scaleX(1.0337);">Não</div>
<svg style="left:708px;top:316px" width="5" height="3" viewBox="0 0 5 3"><path d="M0 0H5L2.5 3Z" fill="#6d6d6d"/></svg>
<div class="t" style="left:726.60px;top:295.69px;font-size:11px;color:#000;transform:scaleX(0.9747);">Alimen. Acompa.</div>
<div class="b" style="left:724px;top:308px;width:84px;height:19px;background:#e4e5e9;border:1px solid #bcc0c6;"></div>
<div class="t" style="left:725.59px;top:311.69px;font-size:11px;color:#000;transform:scaleX(1.0337);">Não</div>
<svg style="left:796px;top:316px" width="5" height="3" viewBox="0 0 5 3"><path d="M0 0H5L2.5 3Z" fill="#b4b4b4"/></svg>
<div class="t" style="left:813.50px;top:295.69px;font-size:11px;color:#780000;transform:scaleX(0.9641);">Usar Pacote?</div>
<div class="b" style="left:816px;top:308px;width:61px;height:19px;background:#e4e5e9;border:1px solid #bcc0c6;"></div>
<div class="t" style="left:817.59px;top:311.69px;font-size:11px;color:#000;transform:scaleX(1.0337);">Não</div>
<svg style="left:865px;top:316px" width="5" height="3" viewBox="0 0 5 3"><path d="M0 0H5L2.5 3Z" fill="#b4b4b4"/></svg>
<div class="r" style="left:891px;top:294px;width:86px;height:12px;background:#ffffff;"></div>
<div class="b" style="left:880px;top:294px;width:12px;height:12px;background:#fff;border:1px solid #2a2a2a;border-width:1.3px"></div>
<div class="t" style="left:895.17px;top:295.69px;font-size:11px;color:#000;transform:scaleX(0.9422);">Day Clinic?</div>
<div class="b" style="left:881px;top:308px;width:64px;height:19px;background:#e4e5e9;border:1px solid #bcc0c6;"></div>
<svg style="left:933px;top:316px" width="5" height="3" viewBox="0 0 5 3"><path d="M0 0H5L2.5 3Z" fill="#b4b4b4"/></svg>
<div class="t" style="left:129.66px;top:329.69px;font-size:11px;color:#780000;transform:scaleX(0.9492);">Local da Admissão</div>
<div class="b" style="left:132px;top:342px;width:119px;height:19px;background:#fff;border:1px solid #b9bdc3;"></div>
<div class="t" style="left:133.11px;top:345.69px;font-size:11px;color:#000;transform:scaleX(0.8844);">GERAL</div>
<svg style="left:239px;top:350px" width="5" height="3" viewBox="0 0 5 3"><path d="M0 0H5L2.5 3Z" fill="#6d6d6d"/></svg>
<div class="t" style="left:260.13px;top:329.69px;font-size:11px;color:#780000;transform:scaleX(0.9922);">Natureza do Tratamento</div>
<div class="b" style="left:259px;top:342px;width:119px;height:19px;background:#fff;border:1px solid #b9bdc3;"></div>
<div class="t" style="left:260.48px;top:345.69px;font-size:11px;color:#000;transform:scaleX(0.9374);">CIRURGICO</div>
<svg style="left:366px;top:350px" width="5" height="3" viewBox="0 0 5 3"><path d="M0 0H5L2.5 3Z" fill="#6d6d6d"/></svg>
<div class="t" style="left:383.63px;top:329.69px;font-size:11px;color:#780000;transform:scaleX(0.9846);">Médico que pediu a Internação</div>
<div class="b" style="left:386px;top:342px;width:254px;height:19px;background:#fff;border:1px solid #b9bdc3;"></div>
<div class="t" style="left:387.01px;top:345.69px;font-size:11px;color:#000;transform:scaleX(0.8767);">TESTE SUPERVISOR</div>
<svg style="left:628px;top:350px" width="5" height="3" viewBox="0 0 5 3"><path d="M0 0H5L2.5 3Z" fill="#6d6d6d"/></svg>
<div class="t" style="left:642.74px;top:329.69px;font-size:11px;color:#780000;transform:scaleX(0.9795);">Médico Responsável pela Internação</div>
<div class="b" style="left:645px;top:342px;width:232px;height:19px;background:#fff;border:1px solid #b9bdc3;"></div>
<div class="t" style="left:646.01px;top:345.69px;font-size:11px;color:#000;transform:scaleX(0.8804);">TESTE SUPERVISOR</div>
<svg style="left:865px;top:350px" width="5" height="3" viewBox="0 0 5 3"><path d="M0 0H5L2.5 3Z" fill="#6d6d6d"/></svg>
<div class="t" style="left:879.11px;top:329.69px;font-size:11px;color:#000;">Int. Vinculada</div>
<div class="b" style="left:881px;top:342px;width:64px;height:19px;background:#fff;border:1px solid #b9bdc3;"></div>
<svg style="left:933px;top:350px" width="5" height="3" viewBox="0 0 5 3"><path d="M0 0H5L2.5 3Z" fill="#6d6d6d"/></svg>
<div class="t" style="left:131.46px;top:384.69px;font-size:11px;color:#780000;transform:scaleX(0.9739);">Convênio</div>
<div class="b" style="left:133px;top:398px;width:133px;height:19px;background:#fff;border:1px solid #b9bdc3;"></div>
<div class="t" style="left:134.70px;top:401.69px;font-size:11px;color:#000;transform:scaleX(0.8834);">AFFEGO</div>
<svg style="left:254px;top:406px" width="5" height="3" viewBox="0 0 5 3"><path d="M0 0H5L2.5 3Z" fill="#6d6d6d"/></svg>
<div class="t" style="left:269.45px;top:384.69px;font-size:11px;color:#780000;transform:scaleX(0.9613);">N. Guia</div>
<div class="b" style="left:270px;top:397px;width:115px;height:21px;background:#fff;border:1px solid #7a7a7a;"></div>
<div class="t" style="left:273.19px;top:401.69px;font-size:11px;color:#000;transform:scaleX(0.9845);">123456789</div>
<div class="t" style="left:387.26px;top:384.69px;font-size:11px;color:#780000;transform:scaleX(0.9533);">N. Guia de Solicitação</div>
<div class="b" style="left:388px;top:397px;width:133px;height:21px;background:#fff;border:1px solid #7a7a7a;"></div>
<div class="t" style="left:391.20px;top:401.69px;font-size:11px;color:#000;transform:scaleX(0.9752);">123456789</div>
<div class="t" style="left:525.11px;top:384.69px;font-size:11px;color:#780000;transform:scaleX(0.9811);">Senha do Atendimento</div>
<div class="b" style="left:526px;top:397px;width:120px;height:21px;background:#fff;border:1px solid #c8c8c8;"></div>
<div class="t" style="left:529.40px;top:401.69px;font-size:11px;color:#6d6d6d;transform:scaleX(0.9752);">123456789</div>
<div class="t" style="left:647.15px;top:384.69px;font-size:11px;color:#780000;transform:scaleX(0.9700);">Matrícula do Paciente</div>
<div class="b" style="left:649px;top:397px;width:128px;height:21px;background:#fff;border:1px solid #7a7a7a;"></div>
<div class="t" style="left:652.20px;top:401.69px;font-size:11px;color:#000;transform:scaleX(0.9752);">123456789</div>
<div class="t" style="left:130.91px;top:418.69px;font-size:11px;color:#000;transform:scaleX(1.0142);">Dt. Autorização</div>
<div class="b" style="left:133px;top:432px;width:133px;height:19px;background:#fff;border:1px solid #b9bdc3;"></div>
<div class="blur" style="left:133px;top:433px;width:58px;height:14px;"></div>
<svg style="left:254px;top:440px" width="5" height="3" viewBox="0 0 5 3"><path d="M0 0H5L2.5 3Z" fill="#6d6d6d"/></svg>
<div class="t" style="left:269.35px;top:418.69px;font-size:11px;color:#000;transform:scaleX(0.9643);">Dt. Emissão</div>
<div class="b" style="left:271px;top:431px;width:113px;height:19px;background:#fff;border:1px solid #b9bdc3;"></div>
<div class="blur" style="left:271px;top:434px;width:61px;height:11px;"></div>
<svg style="left:372px;top:439px" width="5" height="3" viewBox="0 0 5 3"><path d="M0 0H5L2.5 3Z" fill="#6d6d6d"/></svg>
<div class="t" style="left:387.21px;top:418.69px;font-size:11px;color:#000;transform:scaleX(1.0085);">Natureza da Internação</div>
<div class="b" style="left:389px;top:432px;width:131px;height:19px;background:#fff;border:1px solid #b9bdc3;"></div>
<div class="t" style="left:390.29px;top:435.69px;font-size:11px;color:#000;transform:scaleX(0.9247);">E-ELETIVA</div>
<svg style="left:508px;top:440px" width="5" height="3" viewBox="0 0 5 3"><path d="M0 0H5L2.5 3Z" fill="#6d6d6d"/></svg>
<div class="t" style="left:525.05px;top:418.69px;font-size:11px;color:#780000;">Cód. Tipo da Internação</div>
<div class="b" style="left:526px;top:431px;width:145px;height:21px;background:#fff;border:1px solid #7a7a7a;"></div>
<div class="t" style="left:529.40px;top:435.69px;font-size:11px;color:#000;transform:scaleX(1.0989);">2</div>
<div class="t" style="left:674.98px;top:418.69px;font-size:11px;color:#000;transform:scaleX(0.9817);">Tipo do Atendimento</div>
<div class="b" style="left:675px;top:431px;width:102px;height:21px;background:#fff;border:1px solid #7a7a7a;"></div>
<div class="t" style="left:132.10px;top:451.69px;font-size:11px;color:#780000;transform:scaleX(0.9566);">Acomodação Cobrada</div>
<div class="b" style="left:132px;top:464px;width:133px;height:19px;background:#fff;border:1px solid #b9bdc3;"></div>
<div class="t" style="left:133.96px;top:468.69px;font-size:11px;color:#000;transform:scaleX(0.9554);">ENFERMARIA (1)</div>
<svg style="left:253px;top:472px" width="5" height="3" viewBox="0 0 5 3"><path d="M0 0H5L2.5 3Z" fill="#6d6d6d"/></svg>
<div class="t" style="left:269.87px;top:451.69px;font-size:11px;color:#000;transform:scaleX(0.9611);">Categoria</div>
<div class="b" style="left:271px;top:465px;width:113px;height:19px;background:#fff;border:1px solid #b9bdc3;"></div>
<div class="t" style="left:272.82px;top:468.69px;font-size:11px;color:#000;transform:scaleX(0.8686);">2-DEPENDENTE</div>
<svg style="left:372px;top:473px" width="5" height="3" viewBox="0 0 5 3"><path d="M0 0H5L2.5 3Z" fill="#6d6d6d"/></svg>
<div class="t" style="left:387.46px;top:451.69px;font-size:11px;color:#000;transform:scaleX(0.9734);">Cód. Proced. Principal (F2)</div>
<div class="b" style="left:388px;top:464px;width:133px;height:21px;background:#fff;border:1px solid #7a7a7a;"></div>
<div class="t" style="left:525.36px;top:451.69px;font-size:11px;color:#000;transform:scaleX(0.9568);">Nome do Procedimento</div>
<div class="b" style="left:527px;top:465px;width:250px;height:19px;background:#eff0f2;border:1px solid #bcc0c6;"></div>
<div class="t" style="left:131.23px;top:486.69px;font-size:11px;color:#780000;transform:scaleX(0.9920);">Plano (Categoria do Atendimento)</div>
<div class="b" style="left:133px;top:500px;width:247px;height:19px;background:#fff;border:1px solid #b9bdc3;"></div>
<div class="t" style="left:135.40px;top:503.69px;font-size:11px;color:#000;transform:scaleX(0.9734);">1 - NORMAL (100%)</div>
<svg style="left:368px;top:508px" width="5" height="3" viewBox="0 0 5 3"><path d="M0 0H5L2.5 3Z" fill="#6d6d6d"/></svg>
<div class="t" style="left:387.51px;top:486.69px;font-size:11px;color:#000;transform:scaleX(0.9941);">Qtd. de diárias autorizadas</div>
<div class="b" style="left:388px;top:499px;width:133px;height:21px;background:#fff;border:1px solid #7a7a7a;"></div>
<div class="t" style="left:525.72px;top:486.69px;font-size:11px;color:#000;transform:scaleX(0.9790);">Senha do AIH</div>
<div class="b" style="left:526px;top:499px;width:145px;height:21px;background:#fff;border:1px solid #7a7a7a;"></div>
<div class="t" style="left:130.69px;top:542.69px;font-size:11px;color:#780000;transform:scaleX(0.9516);">Tabela CID Primário</div>
<div class="b" style="left:132px;top:557px;width:107px;height:19px;background:#fff;border:1px solid #b9bdc3;"></div>
<div class="t" style="left:133.15px;top:560.69px;font-size:11px;color:#000;transform:scaleX(0.9947);">CID-10</div>
<svg style="left:227px;top:565px" width="5" height="3" viewBox="0 0 5 3"><path d="M0 0H5L2.5 3Z" fill="#6d6d6d"/></svg>
<div class="t" style="left:247.37px;top:542.69px;font-size:11px;color:#780000;transform:scaleX(0.9585);">CID Primário (F2)</div>
<div class="b" style="left:249px;top:557px;width:110px;height:19px;background:#fff;border:1px solid #b9bdc3;"></div>
<div class="t" style="left:249.90px;top:560.69px;font-size:11px;color:#000;transform:scaleX(1.1364);">R10.-</div>
<svg style="left:347px;top:565px" width="5" height="3" viewBox="0 0 5 3"><path d="M0 0H5L2.5 3Z" fill="#6d6d6d"/></svg>
<div class="b" style="left:366px;top:557px;width:19px;height:19px;background:#e1e1e1;border:1px solid #adadad;"></div>
<div class="t" style="left:368.26px;top:561.69px;font-size:11px;color:#000;transform:scaleX(1.2491);">...</div>
<div class="t" style="left:391.46px;top:542.69px;font-size:11px;color:#000;transform:scaleX(0.9537);">Descrição do CID Primário</div>
<div class="b" style="left:393px;top:557px;width:267px;height:19px;background:#eff0f2;border:1px solid #bcc0c6;"></div>
<div class="t" style="left:666.34px;top:542.69px;font-size:11px;color:#000;transform:scaleX(0.9751);">Hipótese Diagnóstica</div>
<div class="b" style="left:667px;top:556px;width:279px;height:21px;background:#fff;border:1px solid #7a7a7a;"></div>
<div class="t" style="left:130.69px;top:580.69px;font-size:11px;color:#000;transform:scaleX(0.9611);">Tabela CID Secundário</div>
<div class="b" style="left:132px;top:595px;width:107px;height:19px;background:#fff;border:1px solid #b9bdc3;"></div>
<svg style="left:227px;top:603px" width="5" height="3" viewBox="0 0 5 3"><path d="M0 0H5L2.5 3Z" fill="#6d6d6d"/></svg>
<div class="t" style="left:247.37px;top:580.69px;font-size:11px;color:#000;transform:scaleX(0.9648);">CID Secundário (F2)</div>
<div class="b" style="left:249px;top:594px;width:110px;height:19px;background:#fff;border:1px solid #b9bdc3;"></div>
<svg style="left:347px;top:602px" width="5" height="3" viewBox="0 0 5 3"><path d="M0 0H5L2.5 3Z" fill="#6d6d6d"/></svg>
<div class="b" style="left:366px;top:594px;width:18px;height:19px;background:#e1e1e1;border:1px solid #adadad;"></div>
<div class="t" style="left:368.26px;top:598.69px;font-size:11px;color:#000;transform:scaleX(1.2491);">...</div>
<div class="t" style="left:391.50px;top:580.69px;font-size:11px;color:#000;transform:scaleX(0.9056);">Descrição do CID Secundário</div>
<div class="b" style="left:393px;top:595px;width:267px;height:19px;background:#eff0f2;border:1px solid #bcc0c6;"></div>
<div class="r" style="left:130px;top:640px;width:902px;height:54px;background:#ffffff;"></div>
<div class="b" style="left:131px;top:642px;width:12px;height:12px;background:#fff;border:1px solid #8f8f8f;"></div>
<div class="b" style="left:133px;top:644px;width:8px;height:8px;border:1px solid #bac2cc;background:linear-gradient(135deg,#d8dde3,#f8f8f8)"></div>
<div class="t" style="left:146.90px;top:642.69px;font-size:11px;color:#000;transform:scaleX(1.0080);">Internação Obstétrica</div>
<div class="t" style="left:135.01px;top:659.19px;font-size:11px;color:#000;transform:scaleX(0.9870);">Qtde. de Gestações</div>
<div class="b" style="left:135px;top:673px;width:101px;height:19px;background:#fff;border:1px solid #b9bdc3;"></div>
<div class="t" style="left:210.37px;top:676.69px;font-size:11px;color:#000;transform:scaleX(0.9848);">0</div>
<svg style="left:224px;top:677px" width="5" height="11" viewBox="0 0 5 11"><path d="M0 3H5L2.5 0Z M0 8H5L2.5 11Z" fill="#6d6d6d"/></svg>
<div class="t" style="left:239.70px;top:659.19px;font-size:11px;color:#000;transform:scaleX(1.0121);">Qtde. de Partos</div>
<div class="b" style="left:240px;top:673px;width:76px;height:19px;background:#fff;border:1px solid #b9bdc3;"></div>
<div class="t" style="left:290.37px;top:676.69px;font-size:11px;color:#000;transform:scaleX(0.9848);">0</div>
<svg style="left:304px;top:677px" width="5" height="11" viewBox="0 0 5 11"><path d="M0 3H5L2.5 0Z M0 8H5L2.5 11Z" fill="#6d6d6d"/></svg>
<div class="t" style="left:321.89px;top:659.19px;font-size:11px;color:#000;transform:scaleX(1.0297);">Qtde. de Abortos</div>
<div class="b" style="left:322px;top:673px;width:86px;height:19px;background:#fff;border:1px solid #b9bdc3;"></div>
<div class="t" style="left:382.37px;top:676.69px;font-size:11px;color:#000;transform:scaleX(0.9848);">0</div>
<svg style="left:396px;top:677px" width="5" height="11" viewBox="0 0 5 11"><path d="M0 3H5L2.5 0Z M0 8H5L2.5 11Z" fill="#6d6d6d"/></svg>
<div class="t" style="left:411.81px;top:659.19px;font-size:11px;color:#000;transform:scaleX(0.9934);">Qtde. de Cesárias</div>
<div class="b" style="left:412px;top:673px;width:88px;height:19px;background:#fff;border:1px solid #b9bdc3;"></div>
<div class="t" style="left:474.37px;top:676.69px;font-size:11px;color:#000;transform:scaleX(0.9848);">0</div>
<svg style="left:488px;top:677px" width="5" height="11" viewBox="0 0 5 11"><path d="M0 3H5L2.5 0Z M0 8H5L2.5 11Z" fill="#6d6d6d"/></svg>
<div class="t" style="left:503.81px;top:659.19px;font-size:11px;color:#000;transform:scaleX(0.9954);">Qtde. de Consultas Pré-Natal</div>
<div class="b" style="left:505px;top:673px;width:140px;height:19px;background:#fff;border:1px solid #b9bdc3;"></div>
<div class="t" style="left:619.37px;top:676.69px;font-size:11px;color:#000;transform:scaleX(0.9848);">0</div>
<svg style="left:633px;top:677px" width="5" height="11" viewBox="0 0 5 11"><path d="M0 3H5L2.5 0Z M0 8H5L2.5 11Z" fill="#6d6d6d"/></svg>
<div class="b" style="left:784px;top:673px;width:138px;height:19px;background:#e1e1e1;border:1px solid #adadad;"></div>
<div class="t" style="left:798.05px;top:676.49px;font-size:13.6px;color:#ff0000;font-weight:bold;transform:scaleX(1.0701);-webkit-text-stroke:0">Tipo Sanguíneo</div>
<div class="b" style="left:132px;top:720px;width:909px;height:130px;background:#fff;border:1px solid #b9bdc3;"></div>
<div class="t" style="left:132.73px;top:878.69px;font-size:11px;color:#000;transform:scaleX(0.9915);">Resultado Teste Rápido</div>
<div class="b" style="left:132px;top:893px;width:909px;height:19px;background:#fff;border:1px solid #b9bdc3;"></div>
<div class="t" style="left:132.47px;top:914.69px;font-size:11px;color:#000;transform:scaleX(0.9691);">Cirurgia Proposta</div>
<div class="b" style="left:132px;top:927px;width:268px;height:19px;background:#fff;border:1px solid #b9bdc3;"></div>
<div class="t" style="left:409.79px;top:914.69px;font-size:11px;color:#000;transform:scaleX(1.0218);">Obstetra</div>
<div class="b" style="left:410px;top:927px;width:268px;height:19px;background:#fff;border:1px solid #b9bdc3;"></div>
<svg style="left:666px;top:935px" width="5" height="3" viewBox="0 0 5 3"><path d="M0 0H5L2.5 3Z" fill="#6d6d6d"/></svg>
<div class="t" style="left:686.13px;top:914.69px;font-size:11px;color:#000;transform:scaleX(0.9926);">Pediatra</div>
<div class="b" style="left:686px;top:927px;width:248px;height:19px;background:#fff;border:1px solid #b9bdc3;"></div>
<svg style="left:922px;top:935px" width="5" height="3" viewBox="0 0 5 3"><path d="M0 0H5L2.5 3Z" fill="#6d6d6d"/></svg>
<div class="t" style="left:131.24px;top:971.69px;font-size:11px;color:#000;transform:scaleX(0.9743);">Fonte Remuneraçao do CIH</div>
<div class="b" style="left:133px;top:984px;width:251px;height:19px;background:#fff;border:1px solid #b9bdc3;"></div>
<svg style="left:372px;top:992px" width="5" height="3" viewBox="0 0 5 3"><path d="M0 0H5L2.5 3Z" fill="#6d6d6d"/></svg>
<div class="t" style="left:390.47px;top:971.69px;font-size:11px;color:#000;transform:scaleX(0.9592);">Código do Procedimento Principal (CIH)</div>
<div class="b" style="left:392px;top:984px;width:251px;height:19px;background:#fff;border:1px solid #b9bdc3;"></div>
<svg style="left:631px;top:992px" width="5" height="3" viewBox="0 0 5 3"><path d="M0 0H5L2.5 3Z" fill="#6d6d6d"/></svg>
<div class="t" style="left:649.95px;top:971.69px;font-size:11px;color:#000;transform:scaleX(0.9298);">Valor do SUS</div>
<div class="b" style="left:651px;top:984px;width:119px;height:19px;background:#fff;border:1px solid #b9bdc3;"></div>
<svg style="left:758px;top:992px" width="5" height="3" viewBox="0 0 5 3"><path d="M0 0H5L2.5 3Z" fill="#6d6d6d"/></svg>
<div class="t" style="left:783.76px;top:970.69px;font-size:11px;color:#000;transform:scaleX(0.9537);">Nome da Unidade</div>
<div class="b" style="left:785px;top:983px;width:162px;height:19px;background:#fff;border:1px solid #b9bdc3;"></div>
<div class="t" style="left:786.27px;top:986.69px;font-size:11px;color:#000;transform:scaleX(0.9431);">HOSPITAL SQL - MATRIZ</div>
<svg style="left:935px;top:991px" width="5" height="3" viewBox="0 0 5 3"><path d="M0 0H5L2.5 3Z" fill="#6d6d6d"/></svg>
</body></html>
